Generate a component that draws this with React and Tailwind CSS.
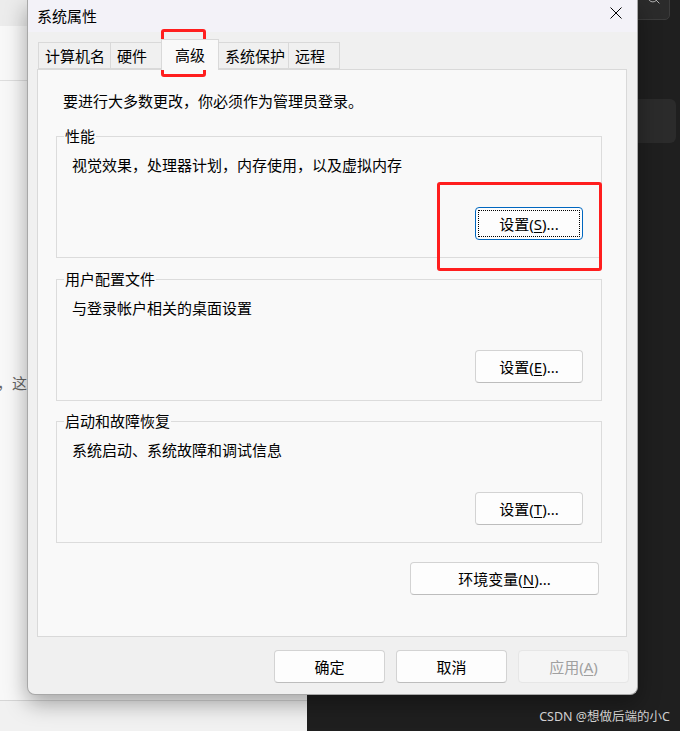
import React from 'react';
import { Search } from 'lucide-react';

const font = { fontFamily: '"Noto Sans", "Noto Sans CJK SC", sans-serif' };

const WinButton = ({ children, className = '', focused = false, disabled = false }) => (
  <div
    className={`relative flex items-center justify-center h-[33px] rounded-[4px] border text-[15px] leading-[20px] ${
      disabled
        ? 'bg-[#f5f5f5] border-[#e6e6e6] text-[#a0a0a0]'
        : focused
        ? 'bg-[#fdfdfd] border-[#0067c0] text-black'
        : 'bg-[#fdfdfd] border-[#d3d3d3] border-b-[#bdbdbd] text-black'
    } ${className}`}
  >
    {focused && <span className="absolute inset-[2px] border border-dotted border-black" />}
    <span>{children}</span>
  </div>
);

const Accel = ({ children }) => <span className="underline underline-offset-2">{children}</span>;

const Group = ({ title, desc, children }) => (
  <div className="relative ml-[18px] w-[546px] h-[122px] border border-[#dcdcdc] flex flex-col">
    <span className="absolute -top-[11px] left-[7px] bg-[#f9f9f9] px-[1px] text-[15px] leading-[20px] text-black">
      {title}
    </span>
    <div className="pt-[18px] pl-[15px] text-[15px] leading-[20px] text-black">{desc}</div>
    <div className="mt-[32px] self-end mr-[18px]">{children}</div>
  </div>
);

const Tab = ({ label, w, selected }) => (
  <div
    className={`flex items-center border border-[#d9d9d9] -ml-px text-[15px] leading-[20px] text-black ${
      selected
        ? 'h-[31px] -mb-px border-b-0 bg-[#f9f9f9] justify-center z-10 relative'
        : 'h-[27px] bg-[#f0f0f0] pl-[6px]'
    } ${w}`}
  >
    {label}
  </div>
);

export default function App() {
  return (
    <div className="relative w-[680px] h-[731px] overflow-hidden bg-[#1f1f1f]" style={font}>
      {/* window behind, left */}
      <div className="absolute left-0 top-0 w-[307px] h-full bg-[#f8f8f8] flex flex-col">
        <div className="h-[26px] bg-[#ececec]" />
        <div className="h-[55px] border-b border-[#dedede]" />
        <div className="mt-[292px] -ml-[3px] text-[15px] leading-[20px] text-[#666]">，这是</div>
        <div className="mt-auto h-[31px] border-t border-[#d6d6d6] bg-[#f1f1f1]" />
      </div>

      {/* dark app, right */}
      <div className="absolute left-[630px] -top-[10px] w-[40px] h-[30px] rounded-[5px] border border-[#3c3c3c] bg-[#2b2b2b] flex items-start justify-center pl-[6px]">
        <Search size={15} strokeWidth={1.3} className="text-[#cfcfcf] mt-[-1px]" />
      </div>
      <div className="absolute left-[600px] top-[99px] w-[76px] h-[44px] rounded-[6px] bg-[#2b2b2b]" />

      {/* dialog */}
      <div className="absolute left-[27px] top-0 w-[611px] h-[695px] bg-[#f0f0f0] rounded-b-[8px] border border-t-0 border-[#a8a8a8] shadow-[0_8px_22px_rgba(0,0,0,0.35)] flex flex-col">
        <div className="h-[32px] bg-[#f3f2f8] flex items-center justify-between pl-[9px] pr-[15px]">
          <span className="text-[15px] leading-[20px] text-black">系统属性</span>
          <svg width="12" height="12" viewBox="0 0 12 12" className="mt-[-6px]">
            <path d="M0.5 0.5 L11.5 11.5 M11.5 0.5 L0.5 11.5" stroke="#000" strokeWidth="1" />
          </svg>
        </div>

        <div className="mt-[8px] h-[29px] flex items-end pl-[11px]">
          <Tab label="计算机名" w="w-[73px]" />
          <Tab label="硬件" w="w-[52px]" />
          <Tab label="高级" w="w-[58px]" selected />
          <Tab label="系统保护" w="w-[71px]" />
          <Tab label="远程" w="w-[52px]" />
        </div>

        <div className="ml-[9px] w-[590px] h-[568px] border border-[#d9d9d9] bg-[#f9f9f9] flex flex-col">
          <div className="pt-[21px] pl-[25px] text-[15px] leading-[20px] text-black">
            要进行大多数更改，你必须作为管理员登录。
          </div>

          <div className="mt-[25px]">
            <Group title="性能" desc="视觉效果，处理器计划，内存使用，以及虚拟内存">
              <WinButton className="w-[108px]" focused>
                设置(<Accel>S</Accel>)...
              </WinButton>
            </Group>
          </div>

          <div className="mt-[21px]">
            <Group title="用户配置文件" desc="与登录帐户相关的桌面设置">
              <WinButton className="w-[108px]">
                设置(<Accel>E</Accel>)...
              </WinButton>
            </Group>
          </div>

          <div className="mt-[20px]">
            <Group title="启动和故障恢复" desc="系统启动、系统故障和调试信息">
              <WinButton className="w-[108px]">
                设置(<Accel>T</Accel>)...
              </WinButton>
            </Group>
          </div>

          <div className="mt-[19px] self-end mr-[27px]">
            <WinButton className="w-[189px]">
              环境变量(<Accel>N</Accel>)...
            </WinButton>
          </div>
        </div>

        <div className="mt-[13px] flex justify-end gap-[11px] pr-[8px]">
          <WinButton className="w-[111px]">确定</WinButton>
          <WinButton className="w-[111px]">取消</WinButton>
          <WinButton className="w-[111px]" disabled>
            应用(<Accel>A</Accel>)
          </WinButton>
        </div>
      </div>

      {/* annotation boxes */}
      <div className="absolute left-[161px] top-[29px] w-[45px] h-[48px] border-[3px] border-[#ff1e1e] rounded-[3px]" />
      <div className="absolute left-[437px] top-[182px] w-[165px] h-[89px] border-[3px] border-[#ff1e1e] rounded-[3px]" />

      {/* watermark */}
      <div className="absolute right-[10px] bottom-[6px] text-[12.5px] leading-[16px] text-[#d0d0d0]">
        CSDN @想做后端的小C
      </div>
    </div>
  );
}
